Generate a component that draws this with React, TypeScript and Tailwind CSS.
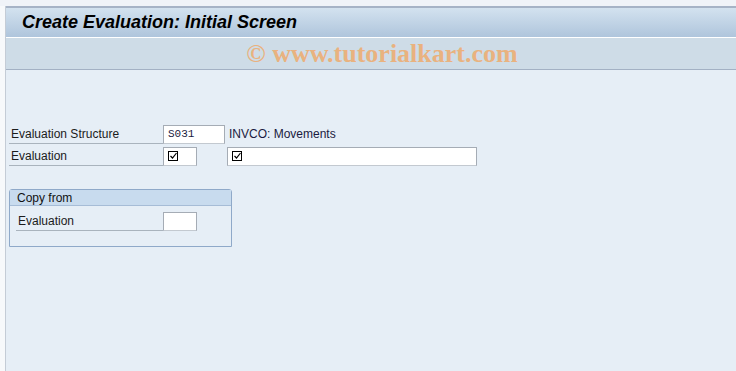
import React from "react";

const CheckMark = () => (
  <svg width="10" height="10" viewBox="0 0 10 10" className="block">
    <rect x="0.5" y="0.5" width="9" height="9" fill="none" stroke="#000" strokeWidth="1" />
    <path d="M2.5 5 L4.5 7 L8.5 2" fill="none" stroke="#000" strokeWidth="1.2" />
  </svg>
);

const Field = ({ width, children }: { width: string; children?: React.ReactNode }) => (
  <div
    className={`${width} h-[19px] bg-white border border-[#a5acb5] border-b-[#c3c9d0] flex items-center pl-[4px]`}
  >
    {children}
  </div>
);

const App = () => {
  return (
    <div
      className="w-[736px] h-[371px] bg-[#f2f5f9] overflow-hidden text-[12px]"
      style={{ fontFamily: "'Liberation Sans', Arial, sans-serif" }}
    >
      <div className="h-[6px] bg-[#f0f3f8]" />
      <div className="flex h-[365px]">
        <div className="w-[5px] bg-[#f7f9fb]" />
        <div className="flex-1 border-l border-[#c4ccd6] bg-[#e6eef6] flex flex-col">
          <div className="border-t-2 border-[#a6b3c6]" />
          <div className="h-[29px] bg-gradient-to-b from-[#d3e2ef] to-[#afc5dc] flex items-center pl-[16px]">
            <span className="text-[18px] font-bold italic text-black">
              Create Evaluation: Initial Screen
            </span>
          </div>
          <div className="h-px bg-white" />
          <div className="h-[32px] bg-[#cedce7] border-b border-[#a3b1c4] flex items-center justify-center pl-[22px]">
            <span
              className="text-[26px] font-bold text-[#e9b27f]"
              style={{ fontFamily: "'Liberation Serif', serif" }}
            >
              © www.tutorialkart.com
            </span>
          </div>

          <div className="pt-[53px] pl-[3px]">
            <div className="flex items-center h-[22px]">
              <div className="w-[154px] h-[19px] border-b border-[#a9b3bd] flex items-center pl-[2px] text-[#1b1b1b]">
                Evaluation Structure
              </div>
              <Field width="w-[62px]">
                <span className="text-[11px] text-[#1a1a40]" style={{ fontFamily: "'Liberation Mono', monospace" }}>
                  S031
                </span>
              </Field>
              <span className="ml-[4px] text-[#1a1a40]">INVCO: Movements</span>
            </div>
            <div className="flex items-center h-[22px]">
              <div className="w-[154px] h-[19px] border-b border-[#a9b3bd] flex items-center pl-[2px] text-[#1b1b1b]">
                Evaluation
              </div>
              <Field width="w-[34px]">
                <CheckMark />
              </Field>
              <div className="w-[30px]" />
              <Field width="w-[250px]">
                <CheckMark />
              </Field>
            </div>

            <div className="mt-[22px] w-[223px] h-[58px] border border-[#8fa9c9] rounded-t-[3px] flex flex-col">
              <div className="h-[16px] bg-[#c8dbee] border-b border-[#a6bcd6] flex items-center pl-[7px] text-[#111]">
                Copy from
              </div>
              <div className="flex items-center h-[26px] pl-[6px] pt-[5px]">
                <div className="w-[147px] h-[19px] border-b border-[#a9b3bd] flex items-center pl-[2px] text-[#1b1b1b]">
                  Evaluation
                </div>
                <Field width="w-[34px]" />
              </div>
            </div>
          </div>
        </div>
      </div>
    </div>
  );
};

export default App;
